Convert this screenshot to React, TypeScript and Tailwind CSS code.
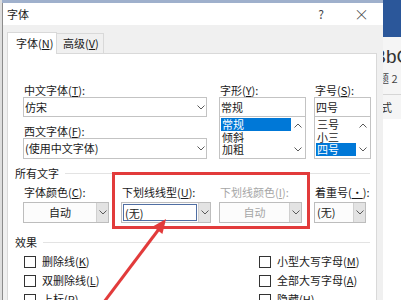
import React from "react";

const Down = () => (
  <svg width="8" height="5" viewBox="0 0 8 5">
    <polyline points="0.5,0.5 4,4 7.5,0.5" fill="none" stroke="#5a5a5a" strokeWidth="1" />
  </svg>
);

const Up = () => (
  <svg width="8" height="5" viewBox="0 0 8 5">
    <polyline points="0.5,4.5 4,1 7.5,4.5" fill="none" stroke="#5a5a5a" strokeWidth="1" />
  </svg>
);

const Label = ({ text, k, disabled }: { text: string; k: string; disabled?: boolean }) => (
  <div
    className={`h-[14px] leading-[14px] pl-px whitespace-nowrap ${
      disabled ? "text-[#a6a6a6]" : "text-[#1a1a1a]"
    }`}
  >
    {text}(<span className="underline">{k}</span>):
  </div>
);

const ComboEdit = ({ value, tall }: { value: string; tall?: boolean }) => (
  <div className={`flex ${tall ? "h-[21px]" : "h-[20px]"} border border-[#c3c3c3] bg-white`}>
    <div className="flex-1 pl-px leading-[18px] whitespace-nowrap">{value}</div>
    <div className="w-[11px] flex items-center justify-center">
      <Down />
    </div>
  </div>
);

const EditBox = ({ value }: { value: string }) => (
  <div className="h-[20px] border border-[#c3c3c3] bg-white pl-px leading-[18px]">{value}</div>
);

const ListBox = ({ items, sel }: { items: string[]; sel: string }) => (
  <div className="flex h-[42px] border border-t-0 border-[#c3c3c3] bg-white">
    <div className="flex-1 pt-px pl-px">
      {items.map((it) => (
        <div
          key={it}
          className={`h-[12.5px] leading-[12.5px] pl-px ${it === sel ? "bg-[#0078d7] text-white" : ""}`}
        >
          {it}
        </div>
      ))}
    </div>
    <div className="w-[14px] flex flex-col items-center justify-between py-[6px]">
      <Up />
      <Down />
    </div>
  </div>
);

const Dropdown = ({
  value,
  center,
  disabled,
  focus,
}: {
  value: string;
  center?: boolean;
  disabled?: boolean;
  focus?: boolean;
}) => (
  <div className="flex h-[21px] border border-[#bdbdbd] bg-[#fcfcfc]">
    <div className="flex-1 p-px">
      <div
        className={`h-full leading-[17px] whitespace-nowrap ${center ? "text-center" : "pl-px"} ${
          disabled ? "text-[#a6a6a6]" : ""
        } ${focus ? "border border-[#4f6ea3] bg-white" : ""}`}
      >
        {value}
      </div>
    </div>
    <div className="w-[12px] flex items-center justify-center bg-[#e3e3e3] border-l border-[#d0d0d0]">
      <Down />
    </div>
  </div>
);

const Header = ({ text }: { text: string }) => (
  <div className="flex items-center h-[14px] pl-[7px]">
    <span className="leading-[14px]">{text}</span>
    <div className="flex-1 h-px bg-[#e3e3e3] ml-[6px] mr-[6px]" />
  </div>
);

const Check = ({ text, k }: { text: string; k: string }) => (
  <div className="flex items-center h-[19px] gap-[6px]">
    <div className="w-[12px] h-[12px] border border-[#333] bg-white" />
    <span>
      {text}(<span className="underline">{k}</span>)
    </span>
  </div>
);

export default function App() {
  return (
    <div className="relative w-[401px] h-[300px] overflow-hidden flex bg-[#e9e9e9] text-[11px] text-[#1a1a1a] font-['Noto_Sans_CJK_SC',sans-serif]">
      {/* left edge of the window behind */}
      <div className="w-[2px] bg-[#dedede]" />

      {/* dialog */}
      <div className="w-[381px] flex flex-col pt-[3px] bg-[#9fb0cc]">
        <div className="flex-1 flex flex-col border-l border-[#8c8c8c] bg-[#f0f0f0]">
          {/* title bar */}
          <div className="h-[22px] bg-white flex items-center pl-[4px]">
            <span className="leading-[14px]">字体</span>
            <span className="ml-auto mr-[30px] text-[12px] text-[#444]">?</span>
            <span className="mr-[14px] text-[15px] font-light text-[#444] leading-[14px]">×</span>
          </div>

          {/* tabs */}
          <div className="h-[28px] flex items-end pl-[4px]">
            <div className="relative z-10 -mb-px w-[50px] h-[22px] bg-white border border-b-0 border-[#d9d9d9] pl-[8px] leading-[20px]">
              字体(<span className="underline">N</span>)
            </div>
            <div className="w-[47px] h-[20px] border-t border-r border-[#d9d9d9] pl-[6px] leading-[19px]">
              高级(<span className="underline">V</span>)
            </div>
          </div>

          {/* tab panel */}
          <div className="flex-1 mx-[4px] mr-[6px] bg-white border border-[#d9d9d9] flex flex-col">
            {/* fonts row */}
            <div className="mt-[29px] ml-[15px] grid grid-cols-[184px_87px_53px] gap-x-[12px]">
              <div className="flex flex-col">
                <Label text="中文字体" k="T" />
                <ComboEdit value="仿宋" />
                <div className="mt-[7px]">
                  <Label text="西文字体" k="F" />
                </div>
                <ComboEdit value="(使用中文字体)" tall />
              </div>
              <div className="flex flex-col">
                <Label text="字形" k="Y" />
                <EditBox value="常规" />
                <ListBox items={["常规", "倾斜", "加粗"]} sel="常规" />
              </div>
              <div className="flex flex-col -ml-[4px]">
                <Label text="字号" k="S" />
                <EditBox value="四号" />
                <ListBox items={["三号", "小三", "四号"]} sel="四号" />
              </div>
            </div>

            {/* all text */}
            <div className="mt-[7px]">
              <Header text="所有文字" />
            </div>
            <div className="mt-[5px] ml-[15px] flex">
              <div className="w-[86px] flex flex-col">
                <Label text="字体颜色" k="C" />
                <div className="mt-[3px]">
                  <Dropdown value="自动" center />
                </div>
              </div>
              <div className="w-[90px] ml-[12px] flex flex-col">
                <Label text="下划线线型" k="U" />
                <div className="mt-[3px]">
                  <Dropdown value="(无)" focus />
                </div>
              </div>
              <div className="w-[83px] ml-[8px] flex flex-col">
                <Label text="下划线颜色" k="I" disabled />
                <div className="mt-[3px]">
                  <Dropdown value="自动" center disabled />
                </div>
              </div>
              <div className="w-[52px] ml-[12px] flex flex-col">
                <Label text="着重号" k="·" />
                <div className="mt-[3px]">
                  <Dropdown value="(无)" />
                </div>
              </div>
            </div>

            {/* effects */}
            <div className="mt-[12px]">
              <Header text="效果" />
            </div>
            <div className="mt-[3px] ml-[16px] grid grid-cols-[235px_1fr]">
              <Check text="删除线" k="K" />
              <Check text="小型大写字母" k="M" />
              <Check text="双删除线" k="L" />
              <Check text="全部大写字母" k="A" />
              <Check text="上标" k="P" />
              <Check text="隐藏" k="H" />
            </div>
          </div>
        </div>
      </div>

      {/* word ribbon behind, right side */}
      <div className="flex-1 flex flex-col overflow-hidden">
        <div className="h-[37px] bg-[#2b579a]" />
        <div className="h-[58px] bg-[#f5f5f5] border-b border-[#d6d6d6] flex flex-col">
          <div className="h-[28px] mt-[6px] text-[19px] leading-[28px] text-[#333] whitespace-nowrap -ml-[33px] font-['Liberation_Sans',sans-serif]">
            AaBbCcDc
          </div>
          <div className="-ml-[16px] leading-[14px] text-[#444] whitespace-nowrap">标题 2</div>
        </div>
        <div className="h-[24px] bg-[#f5f5f5] leading-[24px] text-[#333] whitespace-nowrap -ml-[2px]">式</div>
        <div className="flex-1 bg-white" />
      </div>

      {/* annotation: red box + arrow */}
      <div className="absolute left-[112px] top-[172px] w-[198px] h-[57px] border-[3px] border-[#e23b3b]" />
      <svg className="absolute left-0 top-0" width="401" height="300" viewBox="0 0 401 300">
        <line x1="104" y1="302" x2="159" y2="229" stroke="#e23b3b" strokeWidth="3" />
        <polygon points="166,219 162.4,234 152.8,226.6" fill="#e23b3b" />
      </svg>
    </div>
  );
}
